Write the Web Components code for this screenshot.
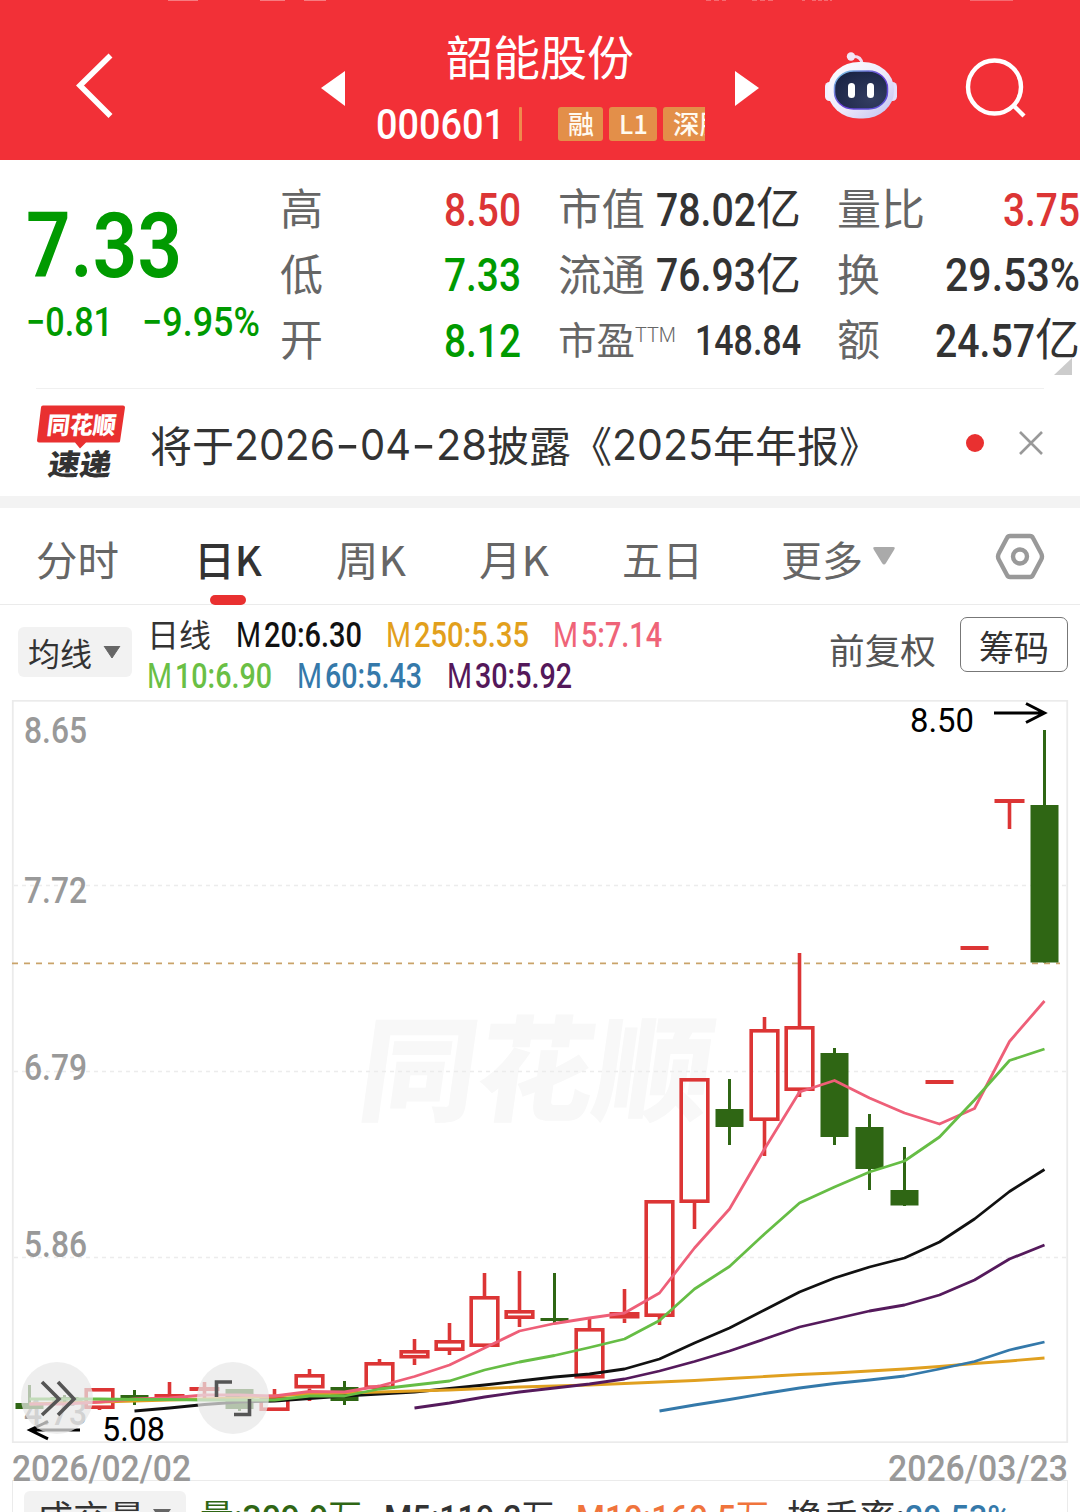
<!DOCTYPE html>
<html lang="zh-CN">
<head>
<meta charset="utf-8">
<title>韶能股份 000601</title>
<style>
  body {
    margin: 0;
    width: 1080px;
    height: 1512px;
    overflow: hidden;
    background: #fff;
    color: #333;
    font-family: "Noto Sans CJK SC", sans-serif;
  }
</style>
</head>
<body>
<stock-page></stock-page>

<script>
(function () {
  const NUM = 'Roboto, "Noto Sans CJK SC", sans-serif';
  const CJK = '"Noto Sans CJK SC", sans-serif';

  function define(name, html, setup) {
    const template = document.createElement('template');
    template.innerHTML = html;
    customElements.define(name, class extends HTMLElement {
      constructor() {
        super();
        this.attachShadow({ mode: 'open' });
        this.shadowRoot.appendChild(template.content.cloneNode(true));
      }
      connectedCallback() {
        if (setup) setup(this, this.shadowRoot);
      }
    });
  }

  // one line of text, condensed or widened to the "w" attribute
  define('fit-text', `
    <style>
      :host { display: inline-block; flex: none; line-height: 1; height: 1em; }
      :host([num]) { font-family: ${NUM}; font-weight: 500; }
      :host([cjk]) { font-family: ${CJK}; --dy: -0.01em; }
      span { display: inline-block; white-space: nowrap; line-height: 1; transform-origin: 0 50%; vertical-align: top; }
    </style>
    <span><slot></slot></span>
  `, (host, root) => {
    const w = Number(host.getAttribute('w'));
    const span = root.querySelector('span');
    host.style.width = w + 'px';
    const k = w / span.getBoundingClientRect().width;
    span.style.transform = `translateY(var(--dy, 0px)) scaleX(${k})`;
  });

  define('stock-tag', `
    <style>
      :host { display: flex; align-items: center; justify-content: center; flex: none; height: 34px; border-radius: 3px; background: #e38f49; color: #fffaf0; font-size: 26px; font-weight: 500; }
    </style>
    <slot></slot>
  `, host => { host.style.width = host.getAttribute('w') + 'px'; });

  define('stock-header', `
    <style>
      :host { display: flex; height: 160px; color: #fff; background: #f23037; }
      svg { flex: none; display: block; }
      .title { width: 329px; height: 160px; display: flex; flex-direction: column; margin-right: 1px; }
      .name { font-size: 47px; margin: 34px 0 0 70px; height: 47px; line-height: 0; }
      .name fit-text { --dy: -0.06em; }
      .sub { display: flex; align-items: center; height: 56px; margin-top: 15px; overflow: hidden; font-size: 43px; }
      .bar { width: 3px; height: 34px; background: #ef8a4d; margin: 0 36px 0 14px; flex: none; border-radius: 1px; }
      stock-tag fit-text { --dy: -0.03em; }
      stock-tag + stock-tag { margin-left: 6px; }
    </style>
    <svg width="300" height="160" viewBox="0 0 300 160">
      <path d="M168 .5h30M260 .5h25" stroke="#f77b80"/>
      <path d="M110.500 55.500 80 85.500 110.500 116" fill="none" stroke="#fff" stroke-width="5.600"/>
    </svg>
    <svg width="76" height="160" viewBox="300 0 76 160"><path d="M304 .5h22" stroke="#f77b80"/><path d="M345 71v35l-24-18z" fill="#fff"/></svg>
    <div class="title">
      <div class="name"><fit-text cjk w="188">韶能股份</fit-text></div>
      <div class="sub">
        <fit-text num w="129">000601</fit-text>
        <div class="bar"></div>
        <stock-tag w="45"><fit-text cjk w="26">融</fit-text></stock-tag>
        <stock-tag w="48"><fit-text cjk w="29">L1</fit-text></stock-tag>
        <stock-tag w="72"><fit-text cjk w="53">深股</fit-text></stock-tag>
      </div>
    </div>
    <svg width="94" height="160" viewBox="706 0 94 160">
      <path d="M706 .5h20M752 .5h24" stroke="#f56a70" stroke-dasharray="5 3"/>
      <path d="M735 71v35l24-18z" fill="#fff"/>
    </svg>
    <svg width="122" height="160" viewBox="800 0 122 160">
      <defs>
        <linearGradient id="shell" x1="0" y1="0" x2="1" y2="1">
          <stop offset="0" stop-color="#fff"/><stop offset=".55" stop-color="#ece9fa"/><stop offset="1" stop-color="#bdbdf0"/>
        </linearGradient>
        <linearGradient id="rim" x1="0" y1="0" x2="1" y2="1">
          <stop offset="0" stop-color="#7ed8e8"/><stop offset=".5" stop-color="#6a3fd6"/><stop offset="1" stop-color="#5a55d8"/>
        </linearGradient>
        <radialGradient id="face" cx=".7" cy=".75" r=".8">
          <stop offset="0" stop-color="#333d62"/><stop offset="1" stop-color="#1b2546"/>
        </radialGradient>
      </defs>
      <path d="M802 .5h3M812 .5h20" stroke="#f56a70" stroke-dasharray="4 2"/>
      <path d="M852 56.500q9-1 10 7" fill="none" stroke="#f1dcf0" stroke-width="3"/>
      <circle cx="851" cy="56.500" r="4.200" fill="#f3e6f6"/>
      <rect x="825" y="82" width="9" height="19" rx="4.500" fill="#f3f0ff"/>
      <rect x="888" y="82" width="9" height="19" rx="4.500" fill="#e4e0fa"/>
      <rect x="828" y="62" width="66" height="56.500" rx="31" ry="27" fill="url(#shell)"/>
      <rect x="834.500" y="71" width="53" height="38" rx="19" ry="17" fill="url(#face)" stroke="url(#rim)" stroke-width="1.500"/>
      <rect x="848" y="83" width="7" height="15" rx="3.500" fill="#fff"/>
      <rect x="867" y="83" width="7" height="15" rx="3.500" fill="#fff"/>
    </svg>
    <svg width="158" height="160" viewBox="922 0 158 160">
      <path d="M970 .5h43" stroke="#f56a70"/>
      <g fill="none" stroke="#fff" stroke-width="4.400"><circle cx="994.500" cy="87" r="26.500"/><path d="m1013 105 11 11"/></g>
    </svg>
  `);

  define('quote-panel', `
    <style>
      :host { display: flex; height: 228px; box-sizing: border-box; padding-top: 17px; font-size: 46px; }
      .price { width: 254px; padding-left: 26px; color: #009a00; }
      .now { height: 90px; font-size: 90px; line-height: 0; margin: 25px 0 0; }
      .now fit-text { font-weight: 600; }
      .change { display: flex; gap: 29px; font-size: 40px; margin-top: 11px; }
      .col { display: flex; flex-direction: column; color: #333; }
      .row { display: flex; justify-content: space-between; align-items: center; height: 65.500px; }
      .high { width: 241px; margin-right: 37px; }
      .cap { width: 243px; margin-right: 36px; }
      .vol { width: 243px; position: relative; }
      .label { font-size: 43px; color: #666; --dy: -0.065em; }
      .val { display: flex; align-items: center; }
      .yi { font-size: 45px; --dy: -0.09em; }
      .up { color: #dc3535; }
      .down { color: #009a00; }
      .pe { display: flex; color: #666; }
      .pe fit-text { --dy: -0.07em; }
      .pe .ttm { font-family: Roboto, sans-serif; font-weight: 300; font-size: 21px; --dy: 3px; }
      svg { position: absolute; right: 8px; top: 181px; }
    </style>
    <div class="price">
      <div class="now"><fit-text num w="156">7.33</fit-text></div>
      <div class="change"><fit-text num w="87">−0.81</fit-text><fit-text num w="118">−9.95%</fit-text></div>
    </div>
    <div class="col high">
      <div class="row"><fit-text cjk class="label" w="43">高</fit-text><fit-text num class="up" w="77">8.50</fit-text></div>
      <div class="row"><fit-text cjk class="label" w="43">低</fit-text><fit-text num class="down" w="77">7.33</fit-text></div>
      <div class="row"><fit-text cjk class="label" w="43">开</fit-text><fit-text num class="down" w="77">8.12</fit-text></div>
    </div>
    <div class="col cap">
      <div class="row"><fit-text cjk class="label" w="87">市值</fit-text><div class="val"><fit-text num w="100">78.02</fit-text><fit-text cjk class="yi" w="45">亿</fit-text></div></div>
      <div class="row"><fit-text cjk class="label" w="87">流通</fit-text><div class="val"><fit-text num w="100">76.93</fit-text><fit-text cjk class="yi" w="45">亿</fit-text></div></div>
      <div class="row"><div class="pe"><fit-text cjk style="font-size:38px" w="77">市盈</fit-text><fit-text class="ttm" w="41">TTM</fit-text></div><fit-text num style="font-size:42px" w="106">148.84</fit-text></div>
    </div>
    <div class="col vol">
      <div class="row"><fit-text cjk class="label" w="88">量比</fit-text><fit-text num class="up" w="77">3.75</fit-text></div>
      <div class="row"><fit-text cjk class="label" w="43">换</fit-text><fit-text num w="135">29.53%</fit-text></div>
      <div class="row"><fit-text cjk class="label" w="43">额</fit-text><div class="val"><fit-text num w="100">24.57</fit-text><fit-text cjk class="yi" w="45">亿</fit-text></div></div>
      <svg width="18" height="17"><path d="M18 0v17H0z" fill="#ccc"/></svg>
    </div>
  `);

  define('news-bar', `
    <style>
      :host { display: flex; align-items: center; height: 108px; margin: 0 36px; border-top: 1px solid #f0f0f0; box-sizing: border-box; }
      svg { display: block; flex: none; }
      .text { display: flex; align-items: center; margin-left: 24px; width: 727px; font-size: 42px; padding-top: 2px; }
      .d { font-family: Inter, sans-serif; font-size: 43px; --dy: 1px; }
      .dot { width: 18px; height: 18px; border-radius: 50%; background: #e93030; margin: 0 35px 0 89px; }
    </style>
    <svg width="90" height="76" viewBox="36 405.500 90 76" font-family="Noto Sans CJK SC, sans-serif" font-weight="900">
      <path d="M43 406h80q2 0 2 2l-5 34q0 1-2 1H86l-6 6-5-6H39q-2 0-2-2l4-33q0-2 2-2z" fill="#e93030"/>
      <text transform="translate(46 434) skewX(-7)" font-size="24" textLength="69" lengthAdjust="spacingAndGlyphs" fill="#fff">同花顺</text>
      <text transform="translate(47 475) skewX(-9)" font-size="29" textLength="63" lengthAdjust="spacingAndGlyphs" fill="#333">速递</text>
    </svg>
    <div class="text">
      <fit-text cjk w="84">将于</fit-text><fit-text class="d" w="101">2026</fit-text><fit-text class="d" w="25">-</fit-text><fit-text class="d" w="51">04</fit-text><fit-text class="d" w="25">-</fit-text><fit-text class="d" w="51">28</fit-text><fit-text cjk w="84">披露</fit-text><fit-text cjk w="41">《</fit-text><fit-text class="d" w="101">2025</fit-text><fit-text cjk w="126">年年报</fit-text><fit-text cjk w="40">》</fit-text>
    </div>
    <div class="dot"></div>
    <svg width="24" height="24"><path d="m1 1 22 22M23 1 1 23" stroke="#999" stroke-width="2.600"/></svg>
  `);

  define('period-tab', `
    <style>
      :host { display: flex; align-items: center; height: 96px; font-size: 41px; color: #666; position: relative; flex: none; }
      :host([active]) { color: #333; font-weight: 500; }
      :host([active])::after { content: ""; position: absolute; left: 50%; bottom: -1px; width: 36px; height: 10px; margin-left: -18px; border-radius: 5px; background: #e93030; }
    </style>
    <slot></slot>
  `);

  define('period-tabs', `
    <style>
      :host { display: flex; height: 96px; border-top: 12px solid #f3f3f3; border-bottom: 1px solid #ebebeb; padding-left: 36px; }
      period-tab { margin-top: 4px; height: 92px; }
      svg { margin-top: 24px; flex: none; }
    </style>
    <period-tab><fit-text cjk w="83">分时</fit-text></period-tab>
    <period-tab active style="margin-left:75px"><fit-text cjk w="68">日K</fit-text></period-tab>
    <period-tab style="margin-left:74px"><fit-text cjk w="70">周K</fit-text></period-tab>
    <period-tab style="margin-left:73px"><fit-text cjk w="70">月K</fit-text></period-tab>
    <period-tab style="margin-left:73px"><fit-text cjk w="81">五日</fit-text></period-tab>
    <period-tab style="margin-left:78px"><fit-text cjk w="82">更多</fit-text></period-tab>
    <svg style="margin-left:10px" width="22" height="48" viewBox="873 532 22 48"><path d="M875 547h18q3 0 1 3l-8 13q-2 3-4 0l-8-13q-2-3 1-3z" fill="#aaa"/></svg>
    <svg style="margin-left:100px" width="50" height="50" viewBox="995 532 50 50" fill="none" stroke="#999" stroke-width="4.400" stroke-linejoin="round">
      <path d="M1010 536h20q2 0 3 2l8 15q2 3.500 0 7l-8 15q-1 2-3 2h-20q-2 0-3-2l-8-15q-2-3.500 0-7l8-15q1-2 3-2z"/><circle cx="1020" cy="556.500" r="7"/>
    </svg>
  `);

  define('ma-value', `
    <style>
      :host { display: flex; align-items: center; font-size: 34.500px; color: var(--c); }
      .m { margin-right: 3px; font-weight: 400; }
    </style>
    <fit-text num class="m" w="25">M</fit-text><fit-text num class="v"></fit-text>
  `, (host, root) => {
    const v = root.querySelector('.v');
    v.remove();
    v.textContent = host.getAttribute('v');
    v.setAttribute('w', host.getAttribute('w') - 28);
    root.appendChild(v);
    host.style.setProperty('--c', host.getAttribute('color'));
  });

  define('ma-legend', `
    <style>
      :host { display: flex; height: 95px; box-sizing: border-box; padding: 10px 12px 0 18px; }
      .pill { display: flex; align-items: center; gap: 11px; width: 114px; height: 50px; box-sizing: border-box; padding-left: 10px; margin-top: 12px; background: #f2f2f2; border-radius: 6px; font-size: 32px; flex: none; }
      .rows { width: 697px; box-sizing: border-box; padding-left: 15px; flex: none; }
      .row { display: flex; align-items: center; gap: 25px; height: 41px; font-size: 32px; }
      .row > fit-text { --dy: -0.08em; }
      .adj { font-size: 35.500px; color: #555; margin: 16px 24px 0 0; }
      .chips { display: flex; align-items: center; justify-content: center; width: 108px; height: 55px; box-sizing: border-box; margin-top: 2px; border: 1.500px solid #777; border-radius: 7px; font-size: 35px; }
      .chips fit-text { --dy: 0.02em; }
    </style>
    <div class="pill"><fit-text cjk w="64">均线</fit-text><svg width="18" height="13"><path d="M1 0h16l-8 12z" fill="#666" stroke="#666" stroke-linejoin="round"/></svg></div>
    <div class="rows">
      <div class="row"><fit-text cjk w="64">日线</fit-text><ma-value v="20:6.30" w="126" color="#111"></ma-value><ma-value style="margin-left:-1px" v="250:5.35" w="143" color="#e2a01c"></ma-value><ma-value style="margin-left:-1px" v="5:7.14" w="109" color="#ef6478"></ma-value></div>
      <div class="row"><ma-value v="10:6.90" w="125" color="#6abf45"></ma-value><ma-value v="60:5.43" w="125" color="#3579aa"></ma-value><ma-value v="30:5.92" w="125" color="#54185a"></ma-value></div>
    </div>
    <fit-text cjk class="adj" w="107">前复权</fit-text>
    <div class="chips"><fit-text cjk w="70">筹码</fit-text></div>
  `);

  // candles: x, high, body top, body bottom, low, kind (r hollow, f filled red, g green, d dash)
  const CANDLES = [
    [29.5, 1385, 1403, 1409, 1409, 'g'],
    [64.5, 1395, 1397, 1400, 1402, 'g'],
    [99.5, 1388, 1388, 1409, 1410, 'r'],
    [134.5, 1390, 1395, 1398, 1405, 'g'],
    [169.5, 1382, 1394, 1398, 1401, 'f'],
    [204.5, 1382, 1387, 1391, 1400, 'f'],
    [239.5, 1389, 1389, 1409, 1411, 'g'],
    [274.5, 1389, 1397, 1411, 1411, 'r'],
    [309.5, 1369, 1374, 1388.5, 1401, 'r'],
    [344.5, 1381, 1387, 1401, 1405, 'g'],
    [379.5, 1359, 1362, 1389, 1389, 'r'],
    [414.5, 1339, 1350, 1358.5, 1365, 'r'],
    [449.5, 1323, 1340, 1351, 1355, 'r'],
    [484.5, 1273, 1296, 1347, 1347, 'r'],
    [519.5, 1271, 1310, 1319, 1327, 'r'],
    [554.5, 1273, 1318, 1321, 1324, 'g'],
    [589.5, 1319, 1328, 1378.5, 1378.5, 'r'],
    [624.5, 1289, 1312, 1318.5, 1323, 'f'],
    [659.5, 1200, 1200, 1317, 1325, 'r'],
    [694.5, 1078, 1078, 1203, 1229, 'r'],
    [729.5, 1079, 1109, 1127, 1145, 'g'],
    [764.5, 1017, 1029, 1121, 1156, 'r'],
    [799.5, 953, 1026, 1091, 1097, 'r'],
    [834.5, 1048, 1053, 1137, 1145, 'g'],
    [869.5, 1114, 1127, 1169, 1190, 'g'],
    [904.5, 1147, 1190, 1205.5, 1206, 'g'],
    [939.5, 1080, 1080, 1084, 1084, 'd'],
    [974.5, 946, 946, 950, 950, 'd'],
    [1009.5, 799, 799, 803, 829, 'f'],
    [1044.5, 730, 805, 962.5, 962.5, 'g']
  ];

  // each series ends on the last candle, one value per 35px step
  const LINES = [
    ['#111', [1411, 1408, 1404.5, 1402, 1401, 1398.5, 1396, 1394, 1392, 1388.5, 1385, 1381, 1377, 1374, 1369, 1359, 1343, 1328, 1310, 1292, 1278, 1267, 1258, 1242, 1219, 1191.5, 1169.5]],
    ['#e0a020', [1404, 1403, 1402, 1401, 1400, 1399, 1398, 1396, 1394, 1393, 1392, 1391, 1390, 1388.5, 1387, 1386, 1385, 1383.5, 1382, 1380.5, 1378.5, 1376.5, 1374.5, 1373, 1371, 1369, 1366.5, 1363.5, 1361, 1358]],
    ['#ee5f78', [1404, 1404, 1402, 1399, 1398, 1395, 1395, 1396, 1391.5, 1392, 1386, 1376.5, 1365, 1348, 1331, 1323.5, 1318, 1313, 1293, 1248, 1209, 1149, 1092, 1080.5, 1098, 1113, 1124, 1108.5, 1041.5, 1001]],
    ['#66bd45', [1399, 1399, 1399, 1399.5, 1399.5, 1400, 1400, 1400, 1396, 1396, 1389, 1385, 1381, 1370, 1362, 1355.5, 1347.5, 1339, 1320.5, 1289, 1266.5, 1234, 1203, 1187, 1172, 1161, 1137, 1100, 1060.5, 1049]],
    ['#3479aa', [1411, 1405, 1399.5, 1393.5, 1388, 1383.5, 1380, 1376, 1369, 1361.5, 1350, 1342]],
    ['#551a5c', [1408, 1403, 1397, 1392, 1388, 1384, 1379, 1371, 1361.5, 1351, 1339, 1327, 1319, 1311, 1305, 1295, 1280, 1259, 1245]]
  ];

  function candle([x, hi, top, bot, lo, kind]) {
    if (kind === 'g') {
      return `<path d="M${x} ${hi}V${lo}" stroke="#2f6614" stroke-width="3"/><rect x="${x - 14}" y="${top}" width="28" height="${bot - top}" fill="#2f6614"/>`;
    }
    const half = kind === 'd' ? 14 : 15;
    const wick = `<path d="M${x} ${hi}V${top}M${x} ${bot}V${lo}" stroke="#dc3535" stroke-width="3.600"/>`;
    if (kind === 'r') {
      return wick + `<rect x="${x - 13.3}" y="${top + 1.8}" width="26.600" height="${bot - top - 3.6}" fill="none" stroke="#dc3535" stroke-width="3.600"/>`;
    }
    return wick + `<rect x="${x - half}" y="${top}" width="${half * 2}" height="${bot - top}" fill="#dc3535"/>`;
  }

  function line([color, ys]) {
    const pts = ys.map((y, i) => `${1044.5 - (ys.length - 1 - i) * 35},${y}`).join(' ');
    return `<polyline points="${pts}" fill="none" stroke="${color}" stroke-width="2.800" stroke-linejoin="round"/>`;
  }

  function label(x, y, w, size, fill, str, weight) {
    return `<text x="${x}" y="${y}" font-size="${size}" font-weight="${weight || 500}" fill="${fill}" textLength="${w}" lengthAdjust="spacingAndGlyphs">${str}</text>`;
  }

  define('k-chart', `
    <style>
      :host { display: block; height: 743px; }
      svg { display: block; }
      text { font-family: Roboto, sans-serif; }
      .mark { font-family: "Noto Sans CJK SC", sans-serif; }
    </style>
    <svg width="1080" height="743" viewBox="0 700 1080 743">
      <rect x="12.800" y="700.800" width="1054.400" height="741.400" fill="none" stroke="#ebebeb" stroke-width="1.800"/>
      <text class="mark" transform="translate(355 1112) skewX(-8)" font-size="114" font-weight="900" textLength="352" lengthAdjust="spacingAndGlyphs" fill="#f8f8f8">同花顺</text>
      <path d="M14 885.500H1066M14 1071.500H1066M14 1257.500H1066" stroke="#ececec" stroke-width="1.600" stroke-dasharray="4 4"/>
      ${label(24, 743, 63, 36.5, '#999', '8.65')}
      ${label(24, 903, 63, 36.5, '#999', '7.72')}
      ${label(24, 1080, 63, 36.5, '#999', '6.79')}
      ${label(24, 1257, 63, 36.5, '#999', '5.86')}
      ${label(24, 1425, 63, 36.5, '#999', '4.73')}
      <path d="M12 963.300H1060" stroke="#c9a36a" stroke-width="1.800" stroke-dasharray="6 6"/>
      ${CANDLES.map(candle).join('')}
      ${LINES.map(line).join('')}
      <g fill="none" stroke="#000" stroke-width="3">
        <path d="M994 713h50M1026 703.500l18.500 9.500-18.500 9.500"/>
        <path d="M80 1430H30M48 1421.500 30 1430l18 8.800"/>
      </g>
      ${label(910, 732, 64, 33, '#000', '8.50', 400)}
      ${label(102, 1441, 63, 33, '#000', '5.08', 400)}
      <g fill="#e8e8e8" fill-opacity=".72"><circle cx="57" cy="1398" r="36"/><circle cx="233" cy="1398" r="36"/></g>
      <g fill="none" stroke="#555" stroke-width="3.600">
        <path d="m42 1382 17 17-17 16M58 1382l16 17-16 16"/>
        <path d="M232 1382h-15.500v15M249.500 1399v15.500H234"/>
      </g>
    </svg>
  `);

  define('date-axis', `
    <style>
      :host { display: flex; justify-content: space-between; align-items: center; padding: 14px 12px 0; box-sizing: border-box; font-size: 36px; color: #999; height: 37px; }
    </style>
    <fit-text num w="179">2026/02/02</fit-text><fit-text num w="180">2026/03/23</fit-text>
  `);

  define('volume-bar', `
    <style>
      :host { display: flex; height: 80px; margin: 0 12px; border: 1.500px solid #ebebeb; box-sizing: border-box; font-size: 35px; padding: 10px 0 0 11px; }
      .pill { display: flex; gap: 8px; align-items: flex-start; width: 162px; height: 50px; box-sizing: border-box; padding: 7px 0 0 13px; background: #f2f2f2; border-radius: 6px; }
      .row { display: flex; padding-top: 10px; margin-left: 14px; }
      .row fit-text { margin-right: 22px; }
      .row span { font-weight: 400; }
      svg { margin-top: 11px; flex: none; }
    </style>
    <div class="pill"><fit-text cjk w="108">成交量</fit-text><svg width="18" height="13"><path d="M0 0h18l-9 13z" fill="#666"/></svg></div>
    <div class="row">
      <fit-text num style="color:#2f6614" w="162"><span>量</span>:309.9<span>万</span></fit-text>
      <fit-text num w="170">M5:119.2<span>万</span></fit-text>
      <fit-text num style="color:#f0743c;margin-right:18px" w="193">M10:160.5<span>万</span></fit-text>
      <fit-text num style="margin-right:0" w="118"><span>换手率</span>:</fit-text>
      <fit-text num style="color:#3579aa" w="106">29.53%</fit-text>
    </div>
  `);

  define('stock-page', `
    <style>
      :host { display: flex; flex-direction: column; width: 1080px; height: 1512px; overflow: hidden; }
      :host > * { flex: none; }
    </style>
    <stock-header></stock-header>
    <quote-panel></quote-panel>
    <news-bar></news-bar>
    <period-tabs></period-tabs>
    <ma-legend></ma-legend>
    <k-chart></k-chart>
    <date-axis></date-axis>
    <volume-bar></volume-bar>
  `);
})();
</script>
</body>
</html>
